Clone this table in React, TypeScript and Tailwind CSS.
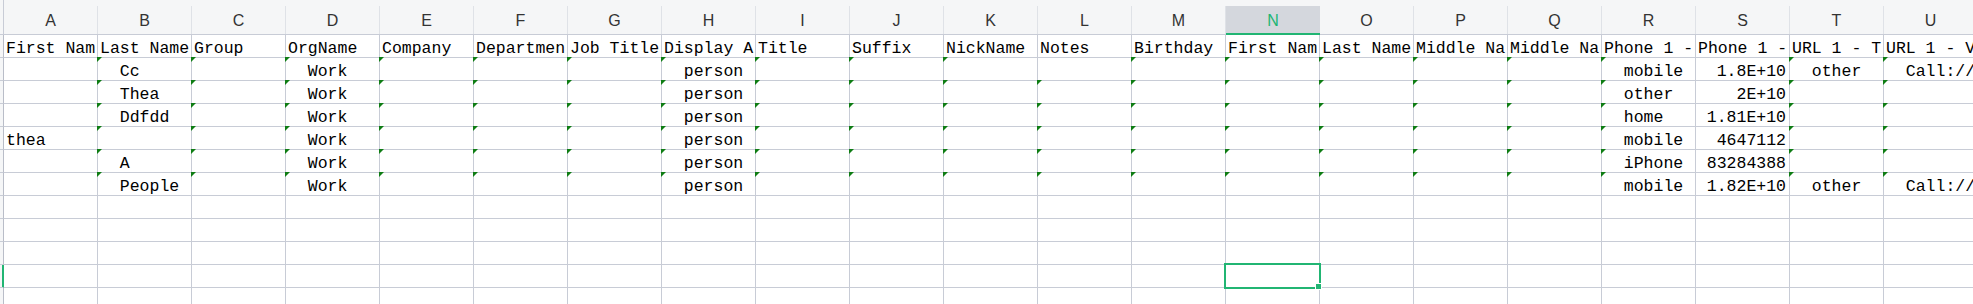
import React from "react";

type Cell = { text: string; right?: boolean };

const COLS = "ABCDEFGHIJKLMNOPQRSTU".split("");
const SELECTED_COL = 13; // N
const SELECTED_ROW = 11;
const ROW_COUNT = 12;

// header texts as they show in the narrow columns
const headers = [
  "First Nam",
  "Last Name",
  "Group",
  "OrgName",
  "Company",
  "Departmen",
  "Job Title",
  "Display A",
  "Title",
  "Suffix",
  "NickName",
  "Notes",
  "Birthday",
  "First Nam",
  "Last Name",
  "Middle Na",
  "Middle Na",
  "Phone 1 -",
  "Phone 1 -",
  "URL 1 - T",
  "URL 1 - V",
];

// column index -> cell, for rows 2..7
const contacts: Record<number, Cell>[] = [
  { 1: { text: "  Cc" }, 3: { text: "  Work" }, 7: { text: "  person" }, 17: { text: "  mobile" }, 18: { text: "1.8E+10", right: true }, 19: { text: "  other" }, 20: { text: "  Call://" } },
  { 1: { text: "  Thea" }, 3: { text: "  Work" }, 7: { text: "  person" }, 17: { text: "  other" }, 18: { text: "2E+10", right: true } },
  { 1: { text: "  Ddfdd" }, 3: { text: "  Work" }, 7: { text: "  person" }, 17: { text: "  home" }, 18: { text: "1.81E+10", right: true } },
  { 0: { text: "thea" }, 3: { text: "  Work" }, 7: { text: "  person" }, 17: { text: "  mobile" }, 18: { text: "4647112", right: true } },
  { 1: { text: "  A" }, 3: { text: "  Work" }, 7: { text: "  person" }, 17: { text: "  iPhone" }, 18: { text: "83284388", right: true } },
  { 1: { text: "  People" }, 3: { text: "  Work" }, 7: { text: "  person" }, 17: { text: "  mobile" }, 18: { text: "1.82E+10", right: true }, 19: { text: "  other" }, 20: { text: "  Call://" } },
];

const hasFlag = (row: number, col: number) => {
  if (row < 2 || row > 7) return false;
  if (col === 0 || col === 18) return false;
  if (row === 2 && col === 11) return false;
  return true;
};

const getCell = (row: number, col: number): Cell | undefined => {
  if (row === 1) return { text: headers[col] };
  return contacts[row - 2]?.[col];
};

const ColumnHeader = ({ letter, active }: { letter: string; active: boolean }) => (
  <div
    className={`h-[35px] border-b ${active ? "border-[#21b573]" : "border-[#c8ccd6]"} bg-[#f5f6f7]`}
  >
    <div
      className={`mt-[6px] h-[28px] flex items-center justify-center pt-[2px] ${
        active
          ? "bg-[#d4d7dd] text-[#21b573] border-b border-[#21b573]"
          : "text-[#333] border-r border-[#dfe2e7]"
      }`}
    >
      {letter}
    </div>
  </div>
);

const App = () => {
  const rows = Array.from({ length: ROW_COUNT }, (_, i) => i + 1);

  return (
    <div className="w-[1973px] h-[304px] overflow-hidden bg-white">
      <div className="grid grid-cols-[4px_repeat(21,94px)] grid-rows-[35px_repeat(12,23px)] font-['Liberation_Sans',Arial,sans-serif] text-[16px]">
        <div className="h-[35px] bg-[#f5f6f7] border-r border-b border-[#c8ccd6]" />
        {COLS.map((c, i) => (
          <ColumnHeader key={c} letter={c} active={i === SELECTED_COL} />
        ))}

        {rows.map((row) => (
          <React.Fragment key={row}>
            <div
              className={`bg-[#f5f6f7] border-b border-[#c8ccd6] border-r ${
                row === SELECTED_ROW ? "border-r-[#21b573] shadow-[inset_-1px_0_0_#21b573]" : "border-r-[#b9bdc8]"
              }`}
            />
            {COLS.map((c, col) => {
              const cell = getCell(row, col);
              return (
                <div
                  key={c}
                  className="relative flex items-end border-r border-b border-[#c8ccd6] font-['Liberation_Mono',monospace] text-[16.5px] leading-[15px] text-black"
                >
                  {hasFlag(row, col) && (
                    <span className="absolute -left-px -top-px w-0 h-0 border-t-[5px] border-r-[5px] border-t-[#0f7d14] border-r-transparent" />
                  )}
                  {cell && (
                    <span
                      className={`flex-1 min-w-0 whitespace-pre pl-[2px] pr-[3px] pb-[1px] ${
                        cell.right ? "text-right" : "text-left"
                      }`}
                    >
                      {cell.text}
                    </span>
                  )}
                  {row === SELECTED_ROW && col === SELECTED_COL && (
                    <div className="absolute -left-[2px] -top-[2px] w-[97px] h-[26px] border-2 border-[#21b573] z-10">
                      <div className="absolute left-[89px] top-[18px] w-[7px] h-[7px] bg-[#21b573] border border-white" />
                    </div>
                  )}
                </div>
              );
            })}
          </React.Fragment>
        ))}
      </div>
    </div>
  );
};

export default App;
